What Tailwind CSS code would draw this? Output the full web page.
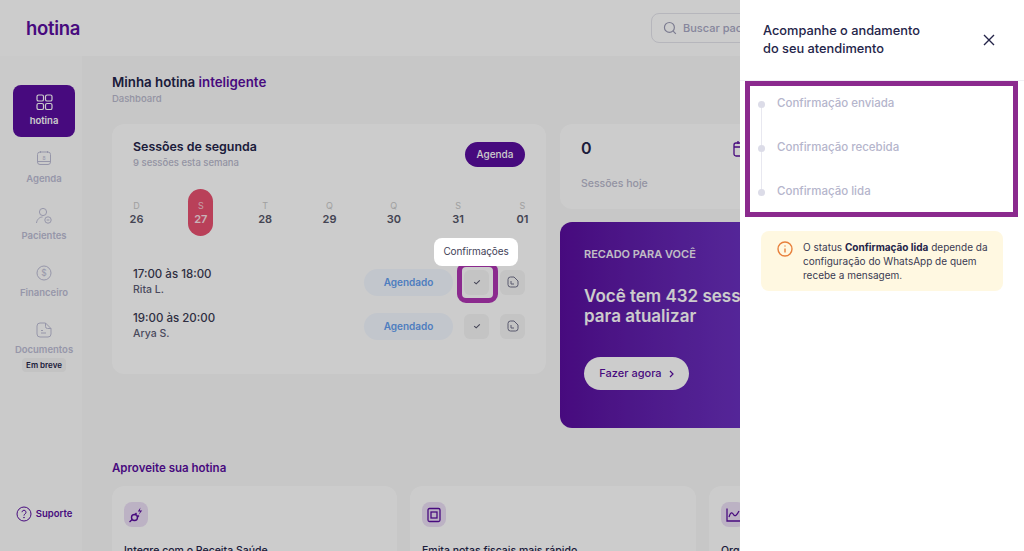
<!DOCTYPE html>
<html lang="pt-BR">
<head>
  <meta charset="UTF-8">
  <title>hotina</title>
  <script src="https://cdn.jsdelivr.net/npm/@tailwindcss/browser@4"></script>
</head>
<body class="bg-[#f9f9f9] text-[#242449] font-['Inter',sans-serif]">
<div class="relative h-[551px] w-[1024px] overflow-hidden">

  <!-- top bar -->
  <header class="flex h-[56px] items-center bg-[#ffffff]">
    <span class="ml-[26px] w-[56px] pt-[1px] text-[18.5px] font-semibold tracking-[-0.3px] text-[#590d9e]">hotina</span>
    <div class="ml-[569px] flex h-[30px] w-[300px] items-center rounded-lg border border-[#e4e4ec] pl-[11px]">
      <svg class="h-[14px] w-[14px] text-[#9a9ab4]" viewBox="0 0 24 24" fill="none" stroke="currentColor" stroke-width="2"><circle cx="11" cy="11" r="8.5"/><path d="M17.5 17.5 22 22"/></svg>
      <span class="ml-[6px] text-[11px] font-medium text-[#a8a8c4]">Buscar paciente</span>
    </div>
  </header>

  <div class="flex">
    <!-- sidebar -->
    <aside class="relative flex h-[495px] w-[82px] flex-col items-center bg-[#fdfdfd] pt-[29px] pl-[6px]">
      <a class="flex h-[52px] w-[62px] flex-col items-center rounded-lg bg-[#590d9e] pt-[9px] text-white">
        <svg class="h-[17px] w-[17px]" viewBox="0 0 17 17" fill="none" stroke="currentColor" stroke-width="1.2"><rect x="1" y="1" width="6.5" height="6" rx="1.6"/><rect x="9.5" y="1" width="6.5" height="6" rx="1.6"/><rect x="1" y="9.5" width="6.5" height="6" rx="1.6"/><rect x="9.5" y="9.5" width="6.5" height="6" rx="1.6"/></svg>
        <span class="mt-[3px] text-[9.5px] font-semibold">hotina</span>
      </a>
      <a class="mt-[13px] flex flex-col items-center text-[#bcbcd4]">
        <svg class="h-[16px] w-[16px]" viewBox="0 0 16 16" fill="none" stroke="currentColor" stroke-width="1"><rect x="1.5" y="2" width="13" height="12.5" rx="2.5"/><path d="M4.5 1v2M11.5 1v2M1.5 11.5h13"/><text x="8" y="9.5" font-size="5" text-anchor="middle" fill="currentColor" stroke="none">8</text></svg>
        <span class="mt-[6px] text-[9.5px] font-semibold">Agenda</span>
      </a>
      <a class="mt-[21px] flex flex-col items-center text-[#bcbcd4]">
        <svg class="h-[18px] w-[18px]" viewBox="0 0 18 18" fill="none" stroke="currentColor" stroke-width="1"><circle cx="8" cy="5" r="3.6"/><path d="M1.5 16c.4-3.5 3-6 6-6"/><circle cx="13" cy="13" r="3.2"/><path d="M11.6 13h2.8"/></svg>
        <span class="mt-[4px] text-[9.5px] font-semibold">Pacientes</span>
      </a>
      <a class="mt-[21px] flex flex-col items-center text-[#bcbcd4]">
        <svg class="h-[16px] w-[16px]" viewBox="0 0 16 16" fill="none" stroke="currentColor" stroke-width="1"><circle cx="8" cy="8" r="7"/><text x="8" y="11" font-size="8.5" text-anchor="middle" fill="currentColor" stroke="none">$</text></svg>
        <span class="mt-[5px] text-[9.5px] font-semibold">Financeiro</span>
      </a>
      <a class="mt-[22px] flex flex-col items-center text-[#bcbcd4]">
        <svg class="h-[16px] w-[16px]" viewBox="0 0 16 16" fill="none" stroke="currentColor" stroke-width="1"><path d="M4 1h5.5L15 6.5V12a3 3 0 0 1-3 3H4a3 3 0 0 1-3-3V4a3 3 0 0 1 3-3Z"/><path d="M9.5 1v3.5a2 2 0 0 0 2 2H15M5 8.5h2M5 11h5"/></svg>
        <span class="mt-[5px] text-[9.5px] font-semibold">Documentos</span>
      </a>
      <span class="mt-[1px] rounded bg-[#f4f4f4] px-[4px] py-[1px] text-[8px] font-semibold text-[#242449]">Em breve</span>
      <a class="mt-auto mb-[29px] flex items-center gap-[4px] text-[#590d9e]">
        <svg class="h-[16px] w-[16px]" viewBox="0 0 16 16" fill="none" stroke="currentColor" stroke-width="1"><circle cx="8" cy="8" r="7"/><path d="M6 6.2a2 2 0 1 1 3 1.8c-.7.4-1 .8-1 1.6"/><circle cx="8" cy="11.6" r=".4"/></svg>
        <span class="text-[9.5px] font-semibold">Suporte</span>
      </a>
    </aside>

    <!-- main -->
    <main class="w-[942px] pl-[30px]">
      <h1 class="mt-[17px] text-[13.3px] leading-[18px] font-semibold">Minha hotina <span class="text-[#590d9e]">inteligente</span></h1>
      <p class="mt-[2px] text-[9.5px] leading-[12px] font-medium text-[#b8b8cc]">Dashboard</p>

      <div class="mt-[19px] flex items-start gap-[14px]">
        <!-- sessions -->
        <section class="h-[250px] w-[434px] rounded-xl bg-white">
          <div class="flex items-start justify-between pt-[14px] pr-[21px] pl-[21px]">
            <div>
              <h2 class="text-[12.4px] leading-[18px] font-semibold">Sessões de segunda</h2>
              <p class="mt-[1px] text-[9.5px] leading-[12px] font-medium text-[#b8b8cc]">9 sessões esta semana</p>
            </div>
            <button class="mt-[4px] h-[25px] w-[60px] rounded-full bg-[#590d9e] text-[10px] font-medium text-white">Agenda</button>
          </div>

          <div class="mt-[20px] flex justify-between pr-[11px] pl-[12px]">
            <div class="flex h-[47px] w-[25px] flex-col items-center justify-center"><span class="text-[9px] leading-[13px] text-[#c8c8c8]">D</span><span class="text-[11px] leading-[14px] font-semibold text-[#555568]">26</span></div>
            <div class="flex h-[47px] w-[25px] flex-col items-center justify-center rounded-full bg-[#e85070]"><span class="text-[9px] leading-[13px] text-[#f6c8d2]">S</span><span class="text-[11px] leading-[14px] font-semibold text-[#fbe0e6]">27</span></div>
            <div class="flex h-[47px] w-[25px] flex-col items-center justify-center"><span class="text-[9px] leading-[13px] text-[#c8c8c8]">T</span><span class="text-[11px] leading-[14px] font-semibold text-[#555568]">28</span></div>
            <div class="flex h-[47px] w-[25px] flex-col items-center justify-center"><span class="text-[9px] leading-[13px] text-[#c8c8c8]">Q</span><span class="text-[11px] leading-[14px] font-semibold text-[#555568]">29</span></div>
            <div class="flex h-[47px] w-[25px] flex-col items-center justify-center"><span class="text-[9px] leading-[13px] text-[#c8c8c8]">Q</span><span class="text-[11px] leading-[14px] font-semibold text-[#555568]">30</span></div>
            <div class="flex h-[47px] w-[25px] flex-col items-center justify-center"><span class="text-[9px] leading-[13px] text-[#c8c8c8]">S</span><span class="text-[11px] leading-[14px] font-semibold text-[#555568]">31</span></div>
            <div class="flex h-[47px] w-[25px] flex-col items-center justify-center"><span class="text-[9px] leading-[13px] text-[#c8c8c8]">S</span><span class="text-[11px] leading-[14px] font-semibold text-[#555568]">01</span></div>
          </div>

          <div class="mt-[31px] flex items-center px-[21px]">
            <div class="flex-1">
              <p class="text-[11.5px] leading-[15px] font-medium text-[#3a3a52]">17:00 às 18:00</p>
              <p class="text-[10.5px] leading-[15px] font-medium text-[#5c5c74]">Rita L.</p>
            </div>
            <span class="flex h-[27px] w-[89px] items-center justify-center rounded-full bg-[#f3f8ff] text-[10px] font-semibold text-[#629df0]">Agendado</span>
            <div class="relative ml-[11px] flex h-[25px] w-[25px] items-center justify-center rounded-md bg-[#f5f5f5]">
              <svg class="h-[8px] w-[8px]" viewBox="0 0 10 10" fill="none" stroke="#55556c" stroke-width="1.4"><path d="M1.5 5.2 4 7.3 8.5 3"/></svg>
              <span class="absolute -top-[8px] -left-[7px] z-20 h-[41px] w-[41px] rounded-[9px] border-[5px] border-[#8b2a8e]"></span>
              <span class="absolute -top-[32px] -left-[30px] z-20 flex h-[28px] w-[84px] items-center justify-center rounded-lg bg-white text-[10px] tracking-[-0.1px] text-[#3f3f58]">Confirmações</span>
            </div>
            <div class="ml-[11px] flex h-[25px] w-[25px] items-center justify-center rounded-md bg-[#f5f5f5]">
              <svg class="h-[12px] w-[12px]" viewBox="0 0 12 12" fill="none" stroke="#70708a" stroke-width="1"><path d="M3.5 1H7l4 4v3.5A2.5 2.5 0 0 1 8.5 11h-5A2.5 2.5 0 0 1 1 8.5v-5A2.5 2.5 0 0 1 3.5 1Z"/><path d="M4 5v3h3"/></svg>
            </div>
          </div>

          <div class="mt-[14px] flex items-center px-[21px]">
            <div class="flex-1">
              <p class="text-[11.5px] leading-[15px] font-medium text-[#3a3a52]">19:00 às 20:00</p>
              <p class="text-[10.5px] leading-[15px] font-medium text-[#5c5c74]">Arya S.</p>
            </div>
            <span class="flex h-[27px] w-[89px] items-center justify-center rounded-full bg-[#f3f8ff] text-[10px] font-semibold text-[#629df0]">Agendado</span>
            <div class="ml-[11px] flex h-[25px] w-[25px] items-center justify-center rounded-md bg-[#f5f5f5]">
              <svg class="h-[8px] w-[8px]" viewBox="0 0 10 10" fill="none" stroke="#55556c" stroke-width="1.4"><path d="M1.5 5.2 4 7.3 8.5 3"/></svg>
            </div>
            <div class="ml-[11px] flex h-[25px] w-[25px] items-center justify-center rounded-md bg-[#f5f5f5]">
              <svg class="h-[12px] w-[12px]" viewBox="0 0 12 12" fill="none" stroke="#70708a" stroke-width="1"><path d="M3.5 1H7l4 4v3.5A2.5 2.5 0 0 1 8.5 11h-5A2.5 2.5 0 0 1 1 8.5v-5A2.5 2.5 0 0 1 3.5 1Z"/><path d="M4 5v3h3"/></svg>
            </div>
          </div>
        </section>

        <!-- right column -->
        <div class="w-[360px]">
          <div class="flex h-[85px] items-start justify-between rounded-xl bg-white pt-[14px] pr-[172px] pl-[21px]">
            <div>
              <p class="text-[16px] leading-[20px] font-semibold">0</p>
              <p class="mt-[19px] text-[10.5px] leading-[14px] font-medium text-[#b8b8cc]">Sessões hoje</p>
            </div>
            <svg class="mt-[2px] h-[17px] w-[15px]" viewBox="0 0 15 17" fill="none" stroke="#590d9e" stroke-width="1.3"><rect x="1" y="3" width="13" height="13" rx="2"/><path d="M5 1v3M10 1v3M1 7h13"/></svg>
          </div>
          <div class="mt-[13px] h-[206px] rounded-xl bg-gradient-to-r from-[#590d9e] to-[#7b4be0] pt-[25px] pl-[24px]">
            <p class="text-[11px] leading-[14px] font-semibold text-[#f2eef8]">RECADO PARA VOCÊ</p>
            <p class="mt-[25px] text-[17px] leading-[20px] font-semibold text-white">Você tem 432 sessões<br>para atualizar</p>
            <button class="mt-[31px] flex h-[33px] w-[105px] items-center justify-center gap-[7px] rounded-full bg-white text-[11px] font-medium text-[#590d9e]">
              Fazer agora
              <svg class="h-[8px] w-[5px]" viewBox="0 0 5 8" fill="none" stroke="currentColor" stroke-width="1.2"><path d="M1 1l3 3-3 3"/></svg>
            </button>
          </div>
        </div>
      </div>

      <h2 class="mt-[33px] text-[11.5px] leading-[14px] font-semibold text-[#590d9e]">Aproveite sua hotina</h2>

      <div class="mt-[11px] flex gap-[13px]">
        <div class="h-[90px] w-[285px] shrink-0 rounded-xl bg-white pt-[16px] pl-[12px]">
          <div class="flex h-[25px] w-[24px] items-center justify-center rounded-lg bg-[#ecdff6]">
            <svg class="h-[16px] w-[16px]" viewBox="0 0 16 16" fill="none" stroke="#590d9e" stroke-width="1.4"><circle cx="6.5" cy="10.5" r="3"/><path d="M1.5 15l2.7-2.4M6.5 8 8.5 6M9 10.5 11 8.5"/><path d="M12.5 .5 9.800 4.500h2.400L10.500 8l3.700-4.500h-2.400z" fill="#590d9e" stroke="none"/></svg>
          </div>
          <p class="mt-[16px] text-[10.5px] font-medium text-[#242449]">Integre com o Receita Saúde</p>
        </div>
        <div class="h-[90px] w-[286px] shrink-0 rounded-xl bg-white pt-[16px] pl-[12px]">
          <div class="flex h-[25px] w-[24px] items-center justify-center rounded-lg bg-[#ecdff6]">
            <svg class="h-[16px] w-[16px]" viewBox="0 0 16 16" fill="none" stroke="#590d9e" stroke-width="1.3"><rect x="2" y="1.5" width="12" height="13" rx="1.5"/><rect x="5" y="5" width="6" height="6"/></svg>
          </div>
          <p class="mt-[16px] text-[10.5px] font-medium text-[#242449]">Emita notas fiscais mais rápido</p>
        </div>
        <div class="h-[90px] w-[285px] shrink-0 rounded-xl bg-white pt-[16px] pl-[12px]">
          <div class="flex h-[25px] w-[24px] items-center justify-center rounded-lg bg-[#ecdff6]">
            <svg class="h-[16px] w-[16px]" viewBox="0 0 16 16" fill="none" stroke="#590d9e" stroke-width="1.3"><path d="M2 1.5V14h13M4 10c1.5-5 3-5 4.5-2.500S12 8 14 4"/></svg>
          </div>
          <p class="mt-[16px] text-[10.5px] font-medium text-[#242449]">Organize sua agenda</p>
        </div>
      </div>
    </main>
  </div>

  <!-- dim layer -->
  <div class="absolute inset-0 z-10 bg-black/20"></div>

  <!-- drawer -->
  <aside class="absolute top-0 right-0 bottom-0 z-30 w-[284px] bg-white">
    <div class="flex h-[81px] items-center border-b border-[#f0f0f4] pr-[29px] pl-[23px]">
      <h2 class="flex-1 text-[12.8px] leading-[18px] font-medium text-[#242449]">Acompanhe o andamento<br>do seu atendimento</h2>
      <svg class="h-[12px] w-[12px]" viewBox="0 0 12 12" fill="none" stroke="#242449" stroke-width="1.4"><path d="M1 1l10 10M11 1 1 11"/></svg>
    </div>

    <div class="mx-[5px] h-[136px] w-[273px] border-[5px] border-[#8b2a8e] pt-[11px] pl-[8px]">
      <ol class="relative flex flex-col gap-[30px]">
        <li class="absolute top-[6px] left-[3px] h-[88px] w-px bg-[#e8e8f0]"></li>
        <li class="relative flex h-[14px] items-center gap-[12px] text-[11.5px] font-medium text-[#b5b5cc]"><span class="h-[7px] w-[7px] rounded-full bg-[#dcdce8]"></span>Confirmação enviada</li>
        <li class="relative flex h-[14px] items-center gap-[12px] text-[11.5px] font-medium text-[#b5b5cc]"><span class="h-[7px] w-[7px] rounded-full bg-[#dcdce8]"></span>Confirmação recebida</li>
        <li class="relative flex h-[14px] items-center gap-[12px] text-[11.5px] font-medium text-[#b5b5cc]"><span class="h-[7px] w-[7px] rounded-full bg-[#dcdce8]"></span>Confirmação lida</li>
      </ol>
    </div>

    <div class="mt-[14px] ml-[21px] flex h-[60px] w-[242px] rounded-lg bg-[#fff8e1] pt-[9px] pl-[16px]">
      <svg class="mt-[1px] h-[16px] w-[16px] shrink-0" viewBox="0 0 16 16" fill="none" stroke="#e8803c" stroke-width="1.4"><circle cx="8" cy="8" r="7"/><path d="M8 7.5v4M8 4.5v1"/></svg>
      <p class="ml-[10px] w-[205px] text-[10px] leading-[14px] text-[#3a3a52]">O status <b class="font-bold text-[#242449]">Confirmação lida</b> depende da configuração do WhatsApp de quem recebe a mensagem.</p>
    </div>
  </aside>
</div>
</body>
</html>
